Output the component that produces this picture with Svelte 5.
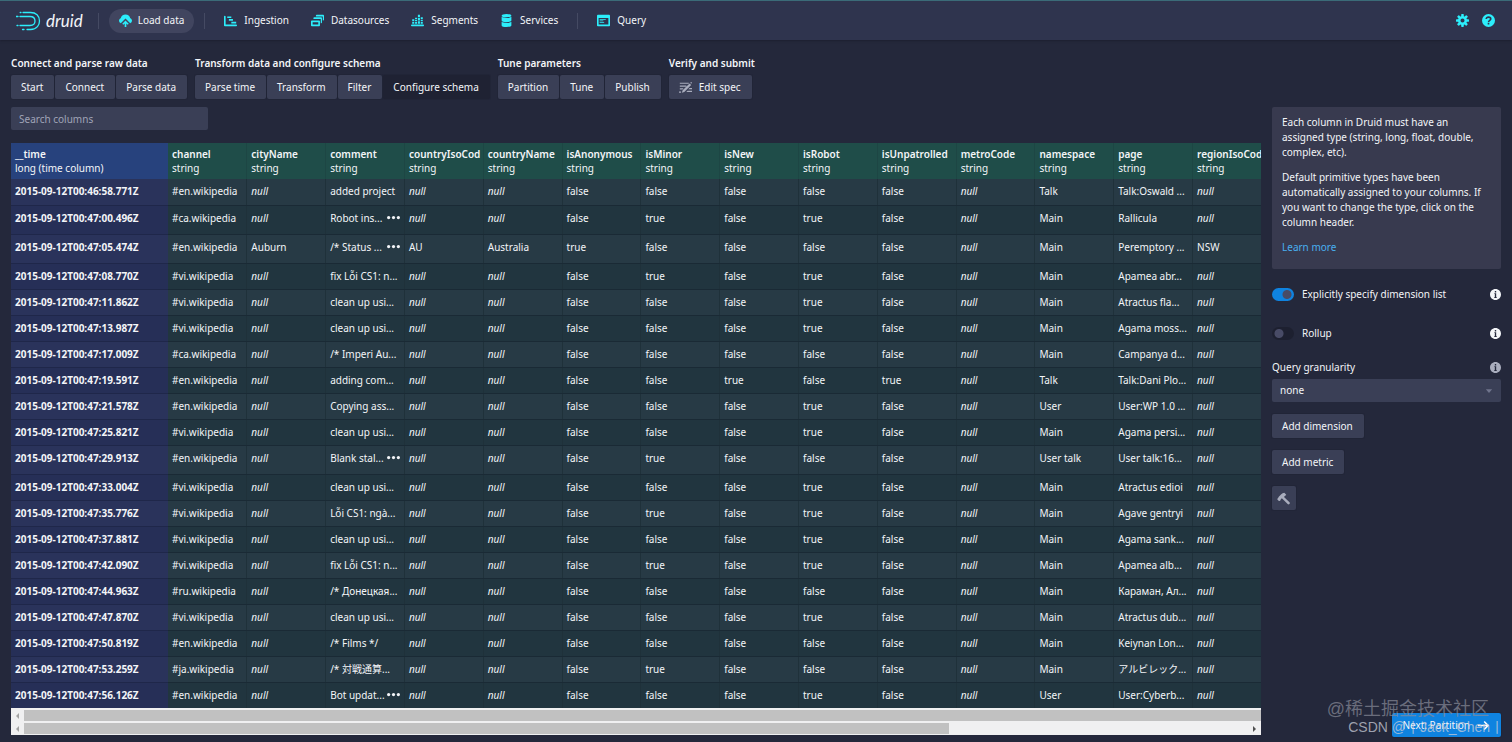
<script>
  const NAV = [
    { label: 'Ingestion', icon: 'gantt' },
    { label: 'Datasources', icon: 'multi' },
    { label: 'Segments', icon: 'stacked' },
    { label: 'Services', icon: 'database' },
  ];

  const STEP_GROUPS = [
    { title: 'Connect and parse raw data', steps: ['Start', 'Connect', 'Parse data'] },
    { title: 'Transform data and configure schema', steps: ['Parse time', 'Transform', 'Filter', 'Configure schema'] },
    { title: 'Tune parameters', steps: ['Partition', 'Tune', 'Publish'] },
    { title: 'Verify and submit', steps: ['Edit spec'] },
  ];

  const COLUMNS = [
    'channel', 'cityName', 'comment', 'countryIsoCod', 'countryName', 'isAnonymous', 'isMinor',
    'isNew', 'isRobot', 'isUnpatrolled', 'metroCode', 'namespace', 'page', 'regionIsoCod',
  ];

  // time, wiki, comment, minor, robot, namespace, page, extras
  const ROWS = [
    ['46:58.771', 'en', 'added project', false, false, 'Talk', 'Talk:Oswald ...'],
    ['47:00.496', 'ca', 'Robot ins...', true, true, 'Main', 'Rallicula', { more: true }],
    ['47:05.474', 'en', '/* Status ...', false, false, 'Main', 'Peremptory ...', {
      more: true, cityName: 'Auburn', countryIsoCod: 'AU', countryName: 'Australia', isAnonymous: 'true', regionIsoCod: 'NSW',
    }],
    ['47:08.770', 'vi', 'fix Lỗi CS1: n...', true, true, 'Main', 'Apamea abr...'],
    ['47:11.862', 'vi', 'clean up usi...', false, true, 'Main', 'Atractus fla...'],
    ['47:13.987', 'vi', 'clean up usi...', false, true, 'Main', 'Agama moss...'],
    ['47:17.009', 'ca', '/* Imperi Au...', false, false, 'Main', 'Campanya d...'],
    ['47:19.591', 'en', 'adding com...', false, false, 'Talk', 'Talk:Dani Plo...', { isNew: 'true', isUnpatrolled: 'true' }],
    ['47:21.578', 'en', 'Copying ass...', false, true, 'User', 'User:WP 1.0 ...'],
    ['47:25.821', 'vi', 'clean up usi...', false, true, 'Main', 'Agama persi...'],
    ['47:29.913', 'en', 'Blank stal...', true, false, 'User talk', 'User talk:16...', { more: true }],
    ['47:33.004', 'vi', 'clean up usi...', false, true, 'Main', 'Atractus edioi'],
    ['47:35.776', 'vi', 'Lỗi CS1: ngà...', true, true, 'Main', 'Agave gentryi'],
    ['47:37.881', 'vi', 'clean up usi...', false, true, 'Main', 'Agama sank...'],
    ['47:42.090', 'vi', 'fix Lỗi CS1: n...', true, true, 'Main', 'Apamea alb...'],
    ['47:44.963', 'ru', '/* Донецкая...', false, false, 'Main', 'Караман, Ал...'],
    ['47:47.870', 'vi', 'clean up usi...', false, true, 'Main', 'Atractus dub...'],
    ['47:50.819', 'en', '/* Films */', false, false, 'Main', 'Keiynan Lon...'],
    ['47:53.259', 'ja', '/* 対戦通算...', true, false, 'Main', 'アルビレック...'],
    ['47:56.126', 'en', 'Bot updat...', false, true, 'User', 'User:Cyberb...', { more: true }],
  ].map(([time, wiki, comment, minor, robot, namespace, page, extra = {}]) => ({
    time: `2015-09-12T00:${time}Z`,
    channel: `#${wiki}.wikipedia`,
    comment,
    isAnonymous: 'false',
    isMinor: String(minor),
    isNew: 'false',
    isRobot: String(robot),
    isUnpatrolled: 'false',
    namespace,
    page,
    ...extra,
  }));

  let activeStep = $state('Configure schema');
  let search = $state('');
  let explicit = $state(true);
  let rollup = $state(false);
  let granularity = $state('none');
</script>

{#snippet icon(name)}
  <svg class="icon" viewBox="0 0 16 16" fill="currentColor" aria-hidden="true">
    {#if name === 'upload'}
      <path d="M8 5.600L2.200 11.400A3.400 3.400 0 0 1 0 8.300c0-1.500.9-2.700 2.200-3.100C2.500 2.700 5 .6 8 .6s5.500 2.100 5.800 4.600C15.100 5.600 16 6.800 16 8.300a3.400 3.400 0 0 1-2.200 3.100z" />
      <path d="M8 8l4 4-1.300 1.300L9 11.600V16H7v-4.400l-1.700 1.700L4 12z" />
    {:else if name === 'gantt'}
      <path d="M1 2c.6 0 1 .4 1 1v10h13a1 1 0 0 1 0 2H1c-.6 0-1-.4-1-1V3c0-.6.4-1 1-1zM4 3h5v2H4zM6 6.300h5v2H6zM9 9.600h6v2H9z" />
    {:else if name === 'multi'}
      <path fill-rule="evenodd" d="M1 8h9c.6 0 1 .4 1 1v5c0 .6-.4 1-1 1H1c-.6 0-1-.4-1-1V9c0-.6.4-1 1-1zm1 2v3h7v-3zM3 5c0-.6.4-1 1-1h8.500c.6 0 1 .4 1 1v5.500c0 .5-.5 1-1.500 1V6H3zM6 2c0-.6.4-1 1-1h8c.6 0 1 .4 1 1v5c0 .6-.4 1-1.500 1V3H6z" />
    {:else if name === 'stacked'}
      <path d="M1 13h14a1 1 0 0 1 0 2H1a1 1 0 0 1 0-2zM1.500 9.500h2.500V12H1.500zM1.500 6.500h2.500v2H1.500zM5 9.500h2.500V12H5zM5 7h2.500v1.500H5zM5 4.500h2.500V6H5zM8.500 9h2.500v3H8.500zM8.500 5h2.500v3H8.500zM8.500 1h2.500v3H8.500zM12 9.500h2.500V12H12zM12 7h2.500v1.500H12zM12 4h2.500v2H12z" />
    {:else if name === 'database'}
      <path d="M8 4c3.310 0 6-.9 6-2s-2.690-2-6-2-6 .9-6 2 2.680 2 6 2zm-6-.48V8c0 1.100 2.690 2 6 2s6-.9 6-2V3.520C12.780 4.400 10.560 5 8 5s-4.780-.6-6-1.480zm0 6V14c0 1.100 2.690 2 6 2s6-.9 6-2V9.520C12.780 10.400 10.560 11 8 11s-4.780-.6-6-1.480z" />
    {:else if name === 'application'}
      <path fill-rule="evenodd" d="M1 1h14c.55 0 1 .45 1 1v12c0 .55-.45 1-1 1H1c-.55 0-1-.45-1-1V2c0-.55.45-1 1-1zm1 4v8h12V5z" />
      <path d="M3.500 6h7a.5.5 0 0 1 0 1h-7a.5.5 0 0 1 0-1zm0 2h4a.5.5 0 0 1 0 1h-4a.5.5 0 0 1 0-1zm0 2h5a.5.5 0 0 1 0 1h-5a.5.5 0 0 1 0-1z" />
    {:else if name === 'cog'}
      <path fill-rule="evenodd" d="M15.190 6.390h-1.850c-.11-.37-.27-.71-.45-1.040l1.360-1.360c.31-.31.31-.82 0-1.130l-1.130-1.130a.803.803 0 0 0-1.130 0l-1.360 1.360c-.33-.17-.67-.33-1.040-.44V.79c0-.44-.36-.8-.8-.8h-1.600c-.44 0-.8.36-.8.8v1.860c-.39.12-.75.28-1.100.47l-1.300-1.300c-.3-.3-.79-.3-1.090 0L1.820 2.910c-.3.3-.3.79 0 1.090l1.300 1.300c-.2.34-.36.7-.48 1.090H.79c-.44 0-.8.36-.8.8v1.600c0 .44.36.8.8.8h1.850c.11.37.27.71.45 1.040l-1.360 1.360c-.31.31-.31.82 0 1.130l1.130 1.130c.31.31.82.31 1.130 0l1.360-1.360c.33.18.67.33 1.040.44v1.860c0 .44.36.8.8.8h1.600c.44 0 .8-.36.8-.8v-1.860c.39-.12.75-.28 1.100-.47l1.300 1.300c.3.3.79.3 1.090 0l1.090-1.090c.3-.3.3-.79 0-1.090l-1.300-1.300c.19-.35.36-.71.48-1.100h1.850c.44 0 .8-.36.8-.8v-1.600a.816.816 0 0 0-.81-.79zM8 10.500a2.500 2.500 0 1 1 0-5 2.500 2.500 0 0 1 0 5z" />
    {:else if name === 'help'}
      <path fill-rule="evenodd" d="M8 0a8 8 0 1 1 0 16A8 8 0 0 1 8 0zM7 11v2h2v-2z" />
      <path class="cut" d="M5.200 6.200C5.200 4.500 6.400 3.800 8 3.800s2.800.8 2.800 2.200C10.800 7.800 8 7.800 8 10" />
    {:else if name === 'info'}
      <path fill-rule="evenodd" d="M8 0C3.580 0 0 3.580 0 8s3.580 8 8 8 8-3.580 8-8-3.580-8-8-8zM7 3h2v2H7V3zm3 10H6v-1h1V7H6V6h3v6h1v1z" />
    {:else if name === 'edit'}
      <path d="M1 2h11v1.500H1zM1 5.500h8V7H1zM1 9h4.500l-1 1.500H1zM4.500 11.500L13 3l2 2-8.500 8.500L3.500 14.500zM13.800 2.200l.8-.8c.6-.4 1.600.6 1.200 1.200l-.8.8zM10.500 12H16v1.500h-7zM13 8.500h3V10h-4.500zM0 13h2.500v1.500H0z" />
    {:else if name === 'build'}
      <path d="M15.400 12.600L8.600 6l1.600-1.600c.3-.1.700-.2.9-.4.3-.3.200-.7 0-.9L9 1C7.500 1.200 6.200 1.900 5.200 2.900L1.900 6.200c-.3.3-.1.700-.3 1L.5 8.200c-.3.3-.3.7 0 1l1.800 1.800c.3.3.7.3 1 0l1-1c.3-.3.1-.8.4-1.100L6 7.600l7.100 7.300c.7.6 1.600.5 2.200-.1.700-.7.700-1.600.1-2.200z" />
    {:else if name === 'arrow'}
      <path d="M9.500 2.500l5.500 5.500-5.500 5.500-1.300-1.300L11.400 9H1V7h10.400L8.200 3.800z" />
    {:else if name === 'more'}
      <circle cx="2" cy="8" r="2" /><circle cx="8" cy="8" r="2" /><circle cx="14" cy="8" r="2" />
    {:else if name === 'caret'}
      <path d="M3 5h10L8 11z" />
    {/if}
  </svg>
{/snippet}

<div class="app">
  <header>
    <a class="brand" href="#home" aria-label="druid">
      <svg class="logo" viewBox="0 0 26 20" aria-hidden="true">
        <path d="M7 1.500h7.500c5.500 0 9 3.300 9 8.500 0 3.700-2.400 8.500-9 8.500H11M8 18.500H6.500M5 1.500h-.8M4 5.500h10c3.200 0 5 1.700 5 4.500 0 2.600-1.900 4.500-5 4.500H4M0 5.500h2M1 14.500h1" />
      </svg>
      <span>druid</span>
    </a>
    <i class="divider"></i>
    <nav>
      <button class="nav pill">{@render icon('upload')}Load data</button>
      <i class="divider"></i>
      {#each NAV as item}
        <button class="nav">{@render icon(item.icon)}{item.label}</button>
      {/each}
      <i class="divider"></i>
      <button class="nav">{@render icon('application')}Query</button>
    </nav>
    <div class="tools">
      <button class="tool" aria-label="Settings">{@render icon('cog')}</button>
      <button class="tool" aria-label="Help">{@render icon('help')}</button>
    </div>
  </header>

  <div class="steps">
    {#each STEP_GROUPS as group}
      <section>
        <h2>{group.title}</h2>
        <div class="step-buttons">
          {#each group.steps as step}
            <button class="btn" class:active={step === activeStep} onclick={() => (activeStep = step)}>
              {#if step === 'Edit spec'}{@render icon('edit')}{/if}{step}
            </button>
          {/each}
        </div>
      </section>
    {/each}
  </div>

  <div class="content">
    <main>
      <input class="search" type="search" placeholder="Search columns" aria-label="Search columns" bind:value={search} />
      <div class="table-box">
        <table>
          <thead>
            <tr>
              <th class="time"><b>__time</b>long (time column)</th>
              {#each COLUMNS as col}
                <th class:dim={search && !col.toLowerCase().includes(search.toLowerCase())}><b>{col}</b>string</th>
              {/each}
            </tr>
          </thead>
          <tbody>
            {#each ROWS as row}
              <tr class:tall={row.more}>
                <td class="time">{row.time}</td>
                {#each COLUMNS as col}
                  <td>
                    {#if col === 'comment' && row.more}
                      <div class="with-more">{row.comment}{@render icon('more')}</div>
                    {:else if row[col] === undefined}
                      <em>null</em>
                    {:else}
                      {row[col]}
                    {/if}
                  </td>
                {/each}
              </tr>
            {/each}
          </tbody>
        </table>
      </div>
      <div class="scrollbar full"><i class="left"></i><span></span></div>
      <div class="scrollbar"><i class="left"></i><span></span><i class="right"></i></div>
    </main>

    <aside>
      <div class="callout">
        <p>Each column in Druid must have an assigned type (string, long, float, double, complex, etc).</p>
        <p>Default primitive types have been automatically assigned to your columns. If you want to change the type, click on the column header.</p>
        <p><a href="#docs">Learn more</a></p>
      </div>
      <label class="switch"><input type="checkbox" bind:checked={explicit} />Explicitly specify dimension list{@render icon('info')}</label>
      <label class="switch"><input type="checkbox" bind:checked={rollup} />Rollup{@render icon('info')}</label>
      <label class="field-label" for="granularity">Query granularity{@render icon('info')}</label>
      <div class="select">
        <select id="granularity" bind:value={granularity}>
          <option>none</option>
          <option>second</option>
          <option>minute</option>
          <option>hour</option>
          <option>day</option>
        </select>
        {@render icon('caret')}
      </div>
      <button class="btn">Add dimension</button>
      <button class="btn">Add metric</button>
      <button class="btn square" aria-label="Toggle raw JSON">{@render icon('build')}</button>
      <button class="btn next">Next: Partition{@render icon('arrow')}</button>
    </aside>
  </div>

  <div class="watermark">
    <div class="cn">@稀土掘金技术社区</div>
    <div class="en">CSDN @丨Jack_Chen丨</div>
  </div>
</div>

<style>
  :global(body) {
    background: #24283b;
  }

  .app {
    position: relative;
    display: flex;
    flex-direction: column;
    height: 100vh;
    overflow: hidden;
    background: #24283b;
    color: #f3f5f8;
    font-family: 'Noto Sans', 'Noto Sans CJK JP', sans-serif;
    font-size: 10px;
    line-height: 15px;
  }

  button, input, select {
    font: inherit;
    color: inherit;
    border: 0;
    margin: 0;
  }

  button { cursor: pointer; }

  .icon {
    flex: none;
    width: 13px;
    height: 13px;
  }

  header {
    display: flex;
    align-items: center;
    height: 39px;
    flex: none;
    padding: 0 17px 0 16px;
    border-top: 1px solid #3b6b78;
    background: #2f344e;
    box-shadow: 0 1px 2px #1c1f30;
  }

  .brand {
    display: flex;
    align-items: center;
    gap: 4px;
    margin-right: 15px;
    color: #f3f5f8;
    text-decoration: none;
    font: italic 400 17px/20px Lato, sans-serif;
  }
  .logo {
    width: 26px;
    height: 20px;
    fill: none;
    stroke: #2ceefb;
    stroke-width: 1.3;
    stroke-linecap: round;
  }

  .divider {
    width: 1px;
    height: 16px;
    background: #454a63;
  }

  nav {
    display: flex;
    align-items: center;
    margin-left: 10px;
  }
  .nav {
    display: flex;
    align-items: center;
    gap: 7px;
    height: 24px;
    padding: 0 11px;
    background: none;
  }
  .nav .icon, .tool .icon { color: #2ceefb; }
  .pill {
    gap: 6px;
    padding: 0 10px;
    margin-right: 10px;
    border-radius: 12px;
    background: #41455f;
  }
  .divider + .nav { margin-left: 8px; }
  nav .nav + .divider { margin-left: 8px; }
  nav .pill + .divider { margin-left: 0; }

  .tools {
    display: flex;
    gap: 13px;
    margin-left: auto;
  }
  .tool {
    display: flex;
    padding: 0;
    background: none;
  }
  .cut {
    fill: none;
    stroke: #2f344e;
    stroke-width: 2;
  }

  .steps {
    display: flex;
    gap: 8px;
    padding: 16px 11px 8px;
  }
  h2 {
    margin: 0 0 4px;
    font-size: 10px;
    line-height: 15px;
    font-weight: 600;
  }
  .step-buttons {
    display: flex;
    gap: 1px;
  }

  .btn {
    display: flex;
    align-items: center;
    gap: 7px;
    height: 24px;
    padding: 0 11px 0 10px;
    border-radius: 2px;
    background: #3a3f56;
    box-shadow: 0 0 0 1px #20243590;
  }
  .btn.active { background: #1f2233; }
  .btn .icon { color: #a9adbd; }

  .content {
    flex: 1;
    min-height: 0;
    display: grid;
    grid-template-columns: minmax(0, 1fr) 229px;
    gap: 11px;
    padding: 0 11px 5px;
  }

  main {
    display: flex;
    flex-direction: column;
    min-height: 0;
    padding-bottom: 2px;
  }
  .search {
    width: 197px;
    height: 23px;
    flex: none;
    box-sizing: border-box;
    margin-bottom: 13px;
    padding: 0 8px;
    border-radius: 2px;
    background: #3a3f56;
  }
  .search::placeholder { color: #a0a4b6; }

  .table-box {
    flex: 1;
    min-height: 0;
    overflow: hidden;
  }
  table {
    width: calc(100% + 11px);
    table-layout: fixed;
    border-collapse: collapse;
  }
  th, td {
    box-sizing: border-box;
    padding: 0 0 0 4px;
    overflow: hidden;
    white-space: nowrap;
    text-align: left;
    border-right: 1px solid #1f313a;
  }
  th {
    height: 36px;
    padding-top: 4px;
    line-height: 14px;
    vertical-align: top;
    font-weight: 400;
    background: #1f4d49;
    border-right-color: #1d4644;
  }
  th b {
    display: block;
    font-weight: 600;
  }
  th.dim { opacity: 0.5; }
  th.time {
    width: 157px;
    background: #27427d;
    border-right: 0;
  }
  td {
    height: 26px;
    padding-top: 5px;
    vertical-align: top;
    background: #21353f;
    border-bottom: 1px solid #1a2a35;
  }
  tr:nth-child(odd) td { background: #273a45; }
  .tall td { height: 29px; }
  td.time, tr:nth-child(odd) td.time {
    font-weight: 700;
    background: #262f57;
    border-right: 0;
    border-bottom-color: #1f274a;
  }
  tr:nth-child(odd) td.time { background: #2a335b; }

  .with-more {
    display: flex;
    justify-content: space-between;
    padding-right: 4px;
  }

  .scrollbar {
    display: flex;
    align-items: center;
    height: 13px;
    flex: none;
    background: #f0f0f1;
  }
  .scrollbar span {
    width: 74%;
    height: 11px;
    background: #c1c1c1;
  }
  .scrollbar.full { border-top: 1px solid #f0f0f1; }
  .scrollbar.full span { width: 99%; }
  .left, .right {
    border: 3px solid transparent;
    border-right-color: #a3a3a3;
    margin: 0 5px 0 2px;
  }
  .right {
    margin: 0 2px 0 auto;
    border-color: transparent transparent transparent #505050;
  }

  aside {
    display: flex;
    flex-direction: column;
    align-items: flex-start;
  }
  .callout {
    margin-bottom: 17px;
    padding: 8px 10px 4px;
    border-radius: 2px;
    background: #383a4f;
  }
  p { margin: 0 0 10px; }
  .callout a {
    color: #48aff0;
    text-decoration: none;
  }

  .switch, .field-label {
    display: flex;
    align-items: center;
    align-self: stretch;
    height: 16px;
    margin-bottom: 23px;
  }
  .switch .icon, .field-label .icon {
    width: 11px;
    height: 11px;
    margin-left: auto;
  }
  .switch input {
    appearance: none;
    width: 22px;
    height: 13px;
    margin-right: 8px;
    border-radius: 7px;
    background: radial-gradient(circle at 7px 50%, #484b66 4px, transparent 5px) #1d2030;
  }
  .switch input:checked {
    background: radial-gradient(circle at 15px 50%, #484b66 4px, transparent 5px) #0f83e0;
  }
  .switch + .field-label { margin: -5px 0 4px; }
  .field-label .icon { color: #a9adbd; }

  .select {
    display: grid;
    align-items: center;
    align-self: stretch;
    margin-bottom: 12px;
  }
  .select select, .select .icon { grid-area: 1 / 1; }
  .select select {
    appearance: none;
    height: 23px;
    padding: 0 8px;
    border-radius: 2px;
    background: #3a3f56;
  }
  .select .icon {
    width: 10px;
    height: 10px;
    margin-right: 7px;
    justify-self: end;
    color: #70758c;
    pointer-events: none;
  }
  aside .btn { margin-bottom: 12px; }
  aside .square {
    width: 24px;
    padding: 0 5px;
  }
  aside .next {
    margin: auto 0 0 auto;
    background: #0f83e0;
  }
  .next .icon { color: #fff; }

  /* overlays the bottom right corner */
  .watermark {
    position: absolute;
    right: 8px;
    bottom: 6px;
    text-align: right;
    pointer-events: none;
    font-family: 'Liberation Sans', 'Noto Sans CJK SC', sans-serif;
  }
  .cn {
    padding-right: 15px;
    font-size: 18px;
    line-height: 18px;
    color: #8a8d9ab0;
  }
  .en {
    font-size: 14px;
    line-height: 18px;
    color: #c8cbd6c0;
  }
</style>
